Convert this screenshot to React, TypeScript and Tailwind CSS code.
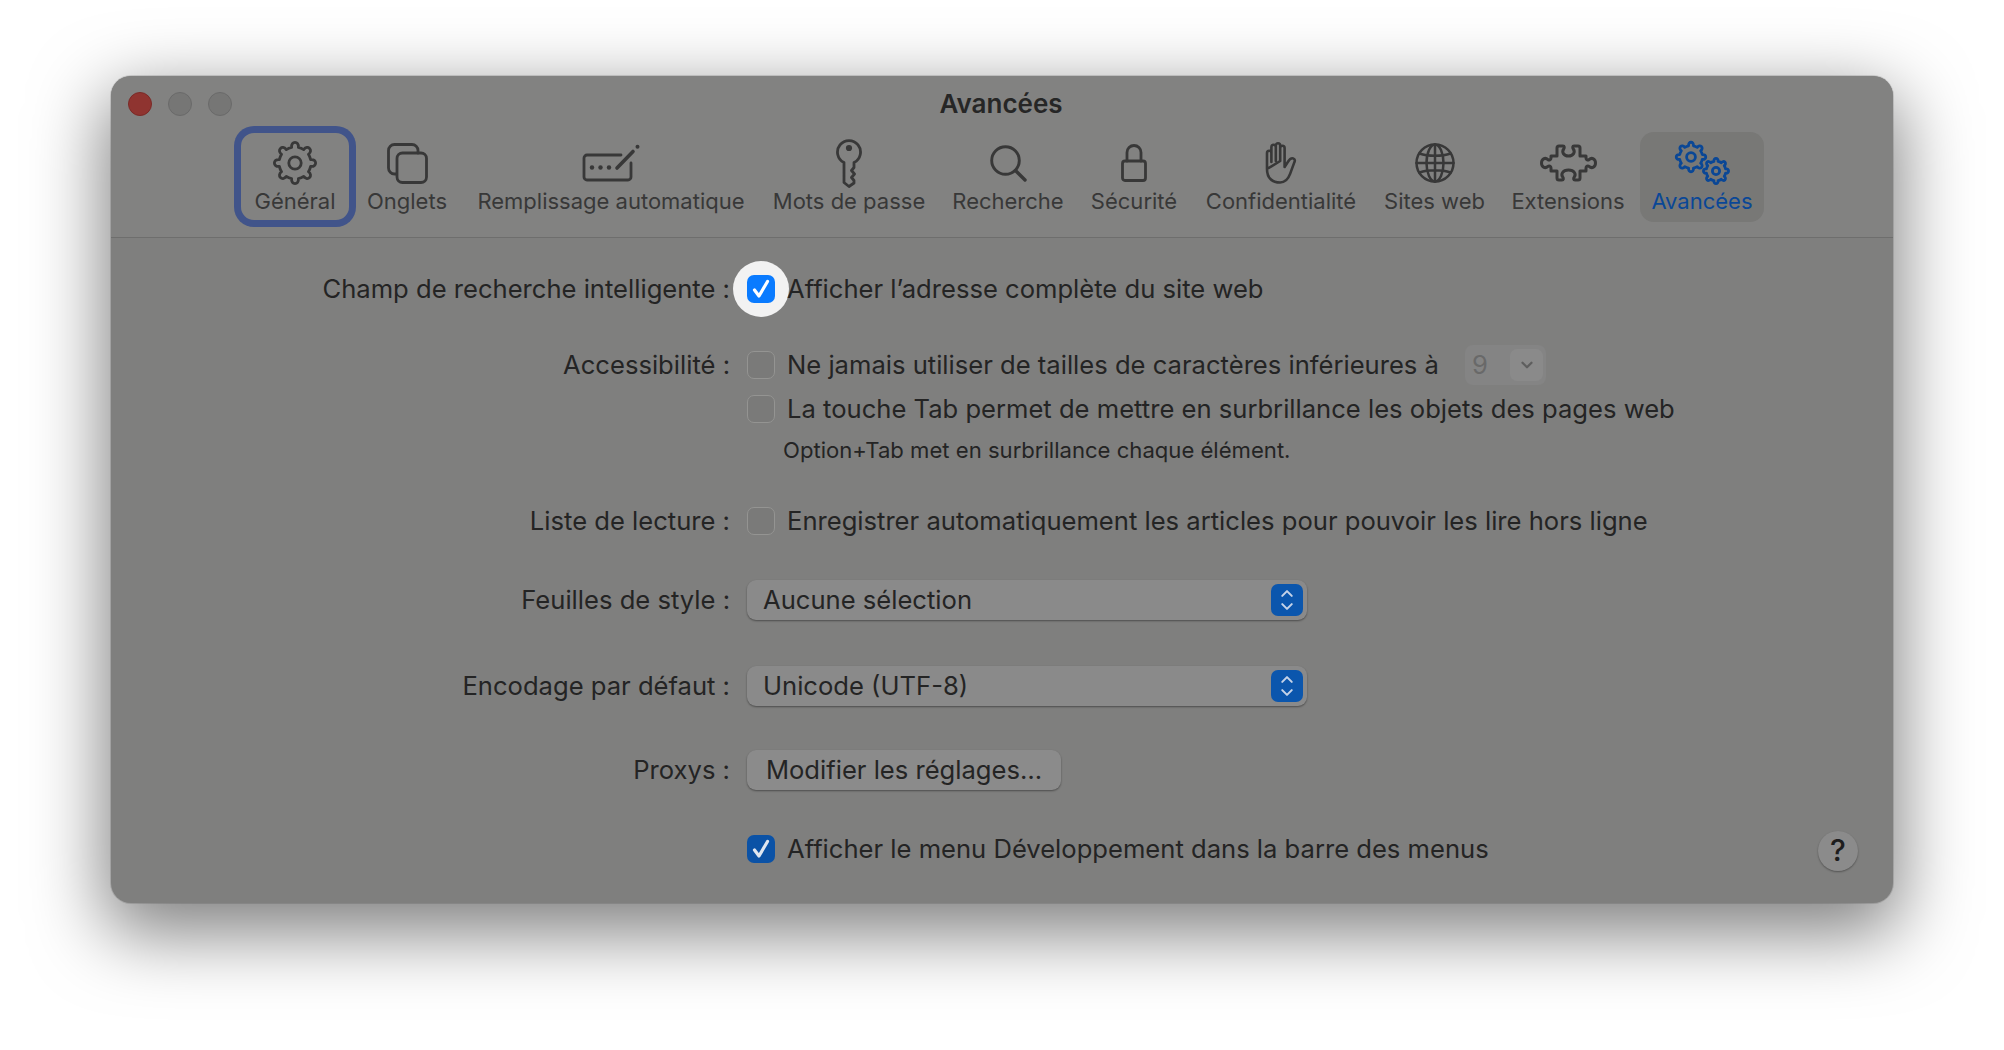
import type { ReactNode } from 'react'
import { ChevronDown, ChevronUp } from 'lucide-react'

// rounded-tooth gear outline, teeth pointing up from the centre
function gearPath(cx: number, cy: number, r1: number, r2: number, teeth: number) {
  const step = (Math.PI * 2) / teeth
  const w = step * 0.27
  const pt = (r: number, a: number) => `${(cx + r * Math.sin(a)).toFixed(2)} ${(cy - r * Math.cos(a)).toFixed(2)}`
  let d = `M${pt(r1, -w)}`
  for (let i = 0; i < teeth; i++) {
    const a = i * step
    d += ` C${pt(r2 * 1.08, a - w * 0.9)} ${pt(r2 * 1.08, a + w * 0.9)} ${pt(r1, a + w)}`
    d += ` A${r1} ${r1} 0 0 1 ${pt(r1, a + step - w)}`
  }
  return d + 'Z'
}

const stroke = { fill: 'none', stroke: 'currentColor', strokeLinecap: 'round', strokeLinejoin: 'round' } as const

const GeneralIcon = () => (
  <svg width="46" height="46" viewBox="0 0 46 46" {...stroke} strokeWidth="2.8">
    <path d={gearPath(23, 23, 16, 21, 8)} />
    <circle cx="23" cy="23" r="6.2" />
  </svg>
)

const TabsIcon = () => (
  <svg width="41" height="41" viewBox="0 0 41 41" {...stroke} strokeWidth="2.8">
    <path d="M9 31 H7.5 a6 6 0 0 1-6-6 V7.5 a6 6 0 0 1 6-6 H25 a6 6 0 0 1 6 6 V10" />
    <rect x="10" y="10" width="29.5" height="29.5" rx="5.5" />
  </svg>
)

const AutofillIcon = () => (
  <svg width="59" height="38" viewBox="0 0 59 38" {...stroke} strokeWidth="2.8">
    <path d="M39 11 H5 a3 3 0 0 0-3 3 V33 a3 3 0 0 0 3 3 H46 a3 3 0 0 0 3-3 V19" />
    <path d="M35 24 L51 7.5" strokeWidth="3.6" />
    <circle cx="55.5" cy="2.8" r="2" fill="currentColor" stroke="none" />
    <circle cx="10" cy="23.5" r="2.2" fill="currentColor" stroke="none" />
    <circle cx="18.5" cy="23.5" r="2.2" fill="currentColor" stroke="none" />
    <circle cx="27" cy="23.5" r="2.2" fill="currentColor" stroke="none" />
  </svg>
)

const KeyIcon = () => (
  <svg width="26" height="49" viewBox="0 0 26 49" {...stroke} strokeWidth="2.8">
    <path d="M8 23.5 A11.5 11.5 0 1 1 18 23.5 V28.5 L15.5 31.5 L18.5 35 L15.5 38.5 L18 41.5 V44 L13 47.5 L8 43.5 Z" />
    <circle cx="13" cy="9" r="3.1" fill="currentColor" stroke="none" />
  </svg>
)

const SearchIcon = () => (
  <svg width="37" height="37" viewBox="0 0 37 37" {...stroke} strokeWidth="2.9">
    <circle cx="15.5" cy="15.5" r="13.8" />
    <path d="M25.5 25.5 L35 35" strokeWidth="3.4" />
  </svg>
)

const LockIcon = () => (
  <svg width="26" height="38" viewBox="0 0 26 38" {...stroke} strokeWidth="2.8">
    <rect x="1.5" y="17" width="23" height="19.5" rx="2.5" />
    <path d="M6 17 V8.5 a7 7 0 0 1 14 0 V17" />
  </svg>
)

const HandIcon = () => (
  <svg width="32" height="42" viewBox="0 0 32 42" {...stroke} strokeWidth="2.6">
    <path d="M2 27 V11 a2.2 2.2 0 0 1 4.4 0 V20 M6.4 20 V5 a2.2 2.2 0 0 1 4.4 0 V19 M10.8 19 V3.5 a2.2 2.2 0 0 1 4.4 0 V19 M15.2 19 V6 a2.2 2.2 0 0 1 4.4 0 V25 l3.2-5 c1.2-2 3-4.2 5.4-3.6 c1.9 .5 1.9 2.2 1.1 4 l-4.2 11.5 c-2.2 6-5 8.6-10 8.6 c-7.6 0-13.1-4-13.1-13.5 Z" />
  </svg>
)

const GlobeIcon = () => (
  <svg width="40" height="40" viewBox="0 0 40 40" {...stroke} strokeWidth="2.5">
    <circle cx="20" cy="20" r="18.5" />
    <ellipse cx="20" cy="20" rx="8.5" ry="18.5" />
    <path d="M20 1.5 V38.5 M1.5 20 H38.5 M4.5 10.5 C13 13.5 27 13.500 35.5 10.5 M4.5 29.5 C13 26.5 27 26.500 35.5 29.5" />
  </svg>
)

const PuzzleIcon = () => (
  <svg width="57" height="38" viewBox="0 0 57 38" {...stroke} strokeWidth="3">
    <path d="M11 12 H17 V4 a2 2 0 0 1 2-2 H23 c1.5 0 1.6 1.8 .7 3 c-2.2 3-.2 7 4.8 7 s7-4 4.8-7 c-.9-1.200-.8-3 .7-3 H38 a2 2 0 0 1 2 2 V12 H46 V14 c0 2 2 2.500 3 1.600 c3-2.600 6.500-.6 6.500 3.400 s-3.500 6-6.500 3.400 c-1-.9-3-.4-3 1.600 V27 H40 V34 a2 2 0 0 1-2 2 H35 c-1.500 0-1.700-1.500-.8-2.800 c2.200-3 .2-7.200-5.700-7.200 s-7.900 4.200-5.700 7.200 c.9 1.300 .7 2.800-.8 2.800 H19 a2 2 0 0 1-2-2 V27 H11 V24 c0-2-2-2.500-3-1.600 c-3 2.600-6.500 .6-6.500-3.400 s3.500-6 6.500-3.400 c1 .9 3 .4 3-1.600 Z" />
  </svg>
)

const AdvancedIcon = () => (
  <svg width="60" height="50" viewBox="0 0 60 50" {...stroke} strokeWidth="2.8">
    <path d={gearPath(19, 19, 11.5, 15, 8)} />
    <circle cx="19" cy="19" r="4.4" />
    <path d={gearPath(44, 33, 9.8, 12.8, 8)} />
    <circle cx="44" cy="33" r="3.6" />
  </svg>
)

const tabs: { label: string; width: string; icon: ReactNode; focused?: boolean; active?: boolean }[] = [
  { label: 'Général', width: 'w-[122px]', icon: <GeneralIcon />, focused: true },
  { label: 'Onglets', width: 'w-[102px]', icon: <TabsIcon /> },
  { label: 'Remplissage automatique', width: 'w-[306px]', icon: <AutofillIcon /> },
  { label: 'Mots de passe', width: 'w-[170px]', icon: <KeyIcon /> },
  { label: 'Recherche', width: 'w-[148px]', icon: <SearchIcon /> },
  { label: 'Sécurité', width: 'w-[104px]', icon: <LockIcon /> },
  { label: 'Confidentialité', width: 'w-[190px]', icon: <HandIcon /> },
  { label: 'Sites web', width: 'w-[117px]', icon: <GlobeIcon /> },
  { label: 'Extensions', width: 'w-[150px]', icon: <PuzzleIcon /> },
  { label: 'Avancées', width: 'w-[124px]', icon: <AdvancedIcon />, active: true },
]

function Row({ label, className, children }: { label?: string; className: string; children: ReactNode }) {
  return (
    <div className={`flex h-[40px] items-center ${className}`}>
      <div className="w-[619px] text-right">{label}</div>
      <div className="ml-[17px] flex flex-1 items-center">{children}</div>
    </div>
  )
}

function Checkbox({ checked, bright }: { checked?: boolean; bright?: boolean }) {
  if (checked) {
    return (
      <span className={`flex h-[28px] w-[28px] shrink-0 items-center justify-center rounded-[7px] ${bright ? 'bg-[#0a7bff] text-white' : 'bg-[#0b52a6] text-[#dfe6f0]'}`}>
        <svg width="28" height="28" viewBox="0 0 28 28" {...stroke} strokeWidth="3.2">
          <path d="M7.5 15 L12 21 L20.5 6.500" />
        </svg>
      </span>
    )
  }
  return <span className="h-[28px] w-[28px] shrink-0 rounded-[7px] border border-[#949492] bg-[#7a7a79]" />
}

function Select({ value }: { value: string }) {
  return (
    <div className="flex h-[40px] w-[560px] items-center justify-between rounded-[9px] bg-[#8a8a8a] pl-[16px] pr-[4px] shadow-[0_1px_2px_rgba(0,0,0,0.4)]">
      <span>{value}</span>
      <span className="flex h-[32px] w-[32px] flex-col items-center justify-center rounded-[7px] bg-[#0b56ad] text-[#c5d3e8]">
        <ChevronUp size={20} strokeWidth={2.6} className="-mb-[3px]" />
        <ChevronDown size={20} strokeWidth={2.6} className="-mt-[3px]" />
      </span>
    </div>
  )
}

export default function App() {
  return (
    <div className="h-[1050px] overflow-hidden bg-white pl-[111px] pt-[76px] font-['Inter',sans-serif] text-[25.600px] text-[#242424] antialiased">
      <div className="h-[827px] w-[1782px] rounded-[20px] bg-[#7f7f7e] shadow-[0_24px_72px_6px_rgba(0,0,0,0.5),0_0_0_1px_rgba(0,0,0,0.12)]">
        <div className="h-[162px] rounded-t-[20px] border-b border-[#6e6e6d] bg-[#828281]">
          <div className="flex h-[50px] items-center pt-[6px]">
            <div className="ml-[17px] flex gap-[16px]">
              <span className="h-[24px] w-[24px] rounded-full border border-[#7b2a27] bg-[#8f3430]" />
              <span className="h-[24px] w-[24px] rounded-full border border-[#6a6a6a] bg-[#767675]" />
              <span className="h-[24px] w-[24px] rounded-full border border-[#6a6a6a] bg-[#767675]" />
            </div>
            <div className="-mt-[2px] ml-[694px] w-[150px] text-center text-[26px] font-semibold text-[#262626]">Avancées</div>
          </div>
          <div className="ml-[123px] flex">
            {tabs.map((t) => (
              <div
                key={t.label}
                className={`flex shrink-0 flex-col items-center ${t.width} ${
                  t.active
                    ? '-ml-[3px] my-[6px] h-[90px] rounded-[14px] bg-[#787876] pt-[6px] text-[#0a4796]'
                    : 'h-[101px] pt-[12px] text-[#383838]'
                } ${t.focused ? 'rounded-[20px] shadow-[inset_0_0_0_7px_#41548a]' : ''}`}
              >
                <div className="flex h-[51px] items-center justify-center pb-[1px]">{t.icon}</div>
                <div className="h-[24px] whitespace-nowrap text-[22px] leading-[24px]">{t.label}</div>
              </div>
            ))}
          </div>
        </div>

        <div className="pt-[31px]">
          <Row label="Champ de recherche intelligente :" className="">
            <span className="-m-[14px] flex h-[56px] w-[56px] items-center justify-center rounded-full bg-[#f2f2f2]">
              <Checkbox checked bright />
            </span>
            <span className="ml-[12px]">Afficher l’adresse complète du site web</span>
          </Row>

          <Row label="Accessibilité :" className="mt-[36px]">
            <Checkbox />
            <span className="ml-[12px] w-[678px] shrink-0">Ne jamais utiliser de tailles de caractères inférieures à</span>
            <span className="flex h-[40px] w-[81px] items-center justify-between rounded-[8px] bg-[#848484] pl-[7px] pr-[3px] text-[#696969]">
              9
              <span className="flex h-[32px] w-[33px] items-center justify-center rounded-[7px] bg-[#8a8a8a] text-[#5e5e5e]">
                <ChevronDown size={18} strokeWidth={3} />
              </span>
            </span>
          </Row>
          <Row className="mt-[4px]">
            <Checkbox />
            <span className="ml-[12px]">La touche Tab permet de mettre en surbrillance les objets des pages web</span>
          </Row>
          <div className="ml-[672px] mt-[6px] h-[30px] text-[22.100px] leading-[30px]">Option+Tab met en surbrillance chaque élément.</div>

          <Row label="Liste de lecture :" className="mt-[36px]">
            <Checkbox />
            <span className="ml-[12px]">Enregistrer automatiquement les articles pour pouvoir les lire hors ligne</span>
          </Row>

          <Row label="Feuilles de style :" className="mt-[39px]">
            <Select value="Aucune sélection" />
          </Row>
          <Row label="Encodage par défaut :" className="mt-[46px]">
            <Select value="Unicode (UTF-8)" />
          </Row>
          <Row label="Proxys :" className="mt-[44px]">
            <button className="flex h-[40px] w-[314px] items-center justify-center rounded-[9px] bg-[#8b8b8b] shadow-[0_1px_2px_rgba(0,0,0,0.4)]">
              Modifier les réglages…
            </button>
          </Row>
          <Row className="mt-[39px]">
            <Checkbox checked />
            <span className="ml-[12px]">Afficher le menu Développement dans la barre des menus</span>
            <span className="ml-auto mr-[35px] mt-[3px] flex h-[40px] w-[40px] items-center justify-center rounded-full bg-[#8b8b8b] text-[30px] font-medium text-[#1d1d1d] shadow-[0_1px_2px_rgba(0,0,0,0.35)]">
              ?
            </span>
          </Row>
        </div>
      </div>
    </div>
  )
}
